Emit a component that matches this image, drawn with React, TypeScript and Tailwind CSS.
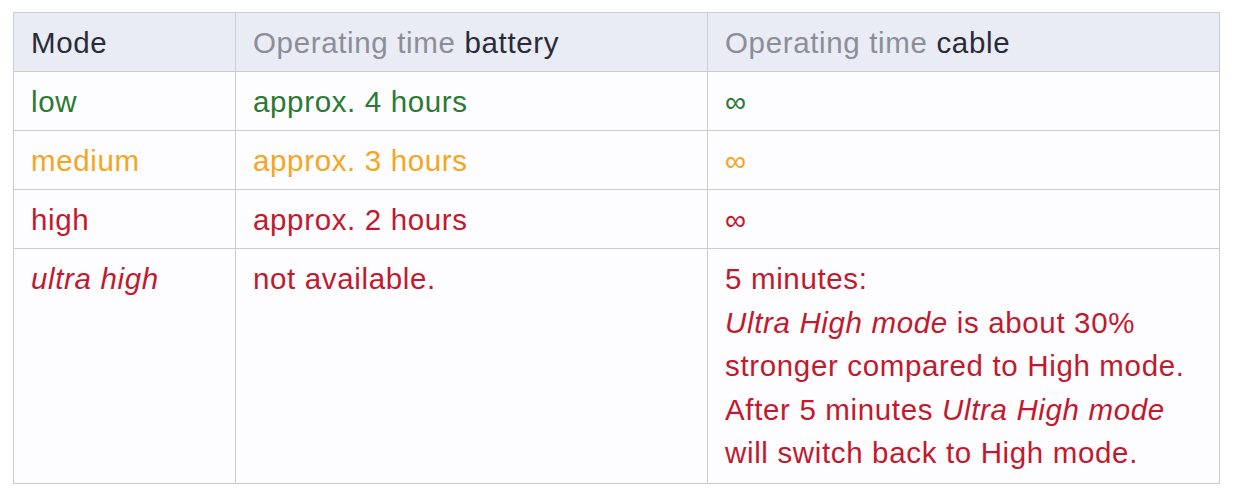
import React from 'react';

type Row = {
    mode: React.ReactNode;
    battery: string;
    cable: React.ReactNode;
    color: string;
};

const rows: Row[] = [
    { mode: 'low', battery: 'approx. 4 hours', cable: '∞', color: 'text-[#2b7a32]' },
    { mode: 'medium', battery: 'approx. 3 hours', cable: '∞', color: 'text-[#f5a51e]' },
    { mode: 'high', battery: 'approx. 2 hours', cable: '∞', color: 'text-[#c3192d]' },
    {
        mode: <em>ultra high</em>,
        battery: 'not available.',
        cable: (
            <>
                5 minutes:
                <br />
                <em>Ultra High mode</em> is about 30%
                <br />
                stronger compared to High mode.
                <br />
                After 5 minutes <em>Ultra High mode</em>
                <br />
                will switch back to High mode.
            </>
        ),
        color: 'text-[#c3192d]',
    },
];

const cell = 'border border-[#c9cbd9] align-top pl-[17px] pr-2 pt-[8px] pb-[6px]';

const App: React.FC = () => {
    return (
        <div className="w-[1236px] h-[495px] bg-white pt-3 pl-[13px]" style={{ fontFamily: '"Liberation Sans", Arial, sans-serif' }}>
            <table className="border-collapse table-fixed w-[1206px] text-[29.5px] leading-[43.5px] tracking-[0.65px] bg-[#fdfdff]">
                <colgroup>
                    <col className="w-[222px]" />
                    <col className="w-[472px]" />
                    <col className="w-[512px]" />
                </colgroup>
                <thead>
                    <tr className="bg-[#e9ebf5] h-[59px]">
                        <th className={`${cell} font-normal text-left text-[#2a2b36]`}>Mode</th>
                        <th className={`${cell} font-normal text-left text-[#8b8d97]`}>
                            Operating time <span className="text-[#2a2b36]">battery</span>
                        </th>
                        <th className={`${cell} font-normal text-left text-[#8b8d97]`}>
                            Operating time <span className="text-[#2a2b36]">cable</span>
                        </th>
                    </tr>
                </thead>
                <tbody>
                    {rows.map((r, i) => (
                        <tr key={i} className={`${r.color} ${i < 3 ? 'h-[59px]' : 'h-[235px]'}`}>
                            <td className={cell}>{r.mode}</td>
                            <td className={cell}>{r.battery}</td>
                            <td className={cell}>{r.cable}</td>
                        </tr>
                    ))}
                </tbody>
            </table>
        </div>
    );
};

export default App;
